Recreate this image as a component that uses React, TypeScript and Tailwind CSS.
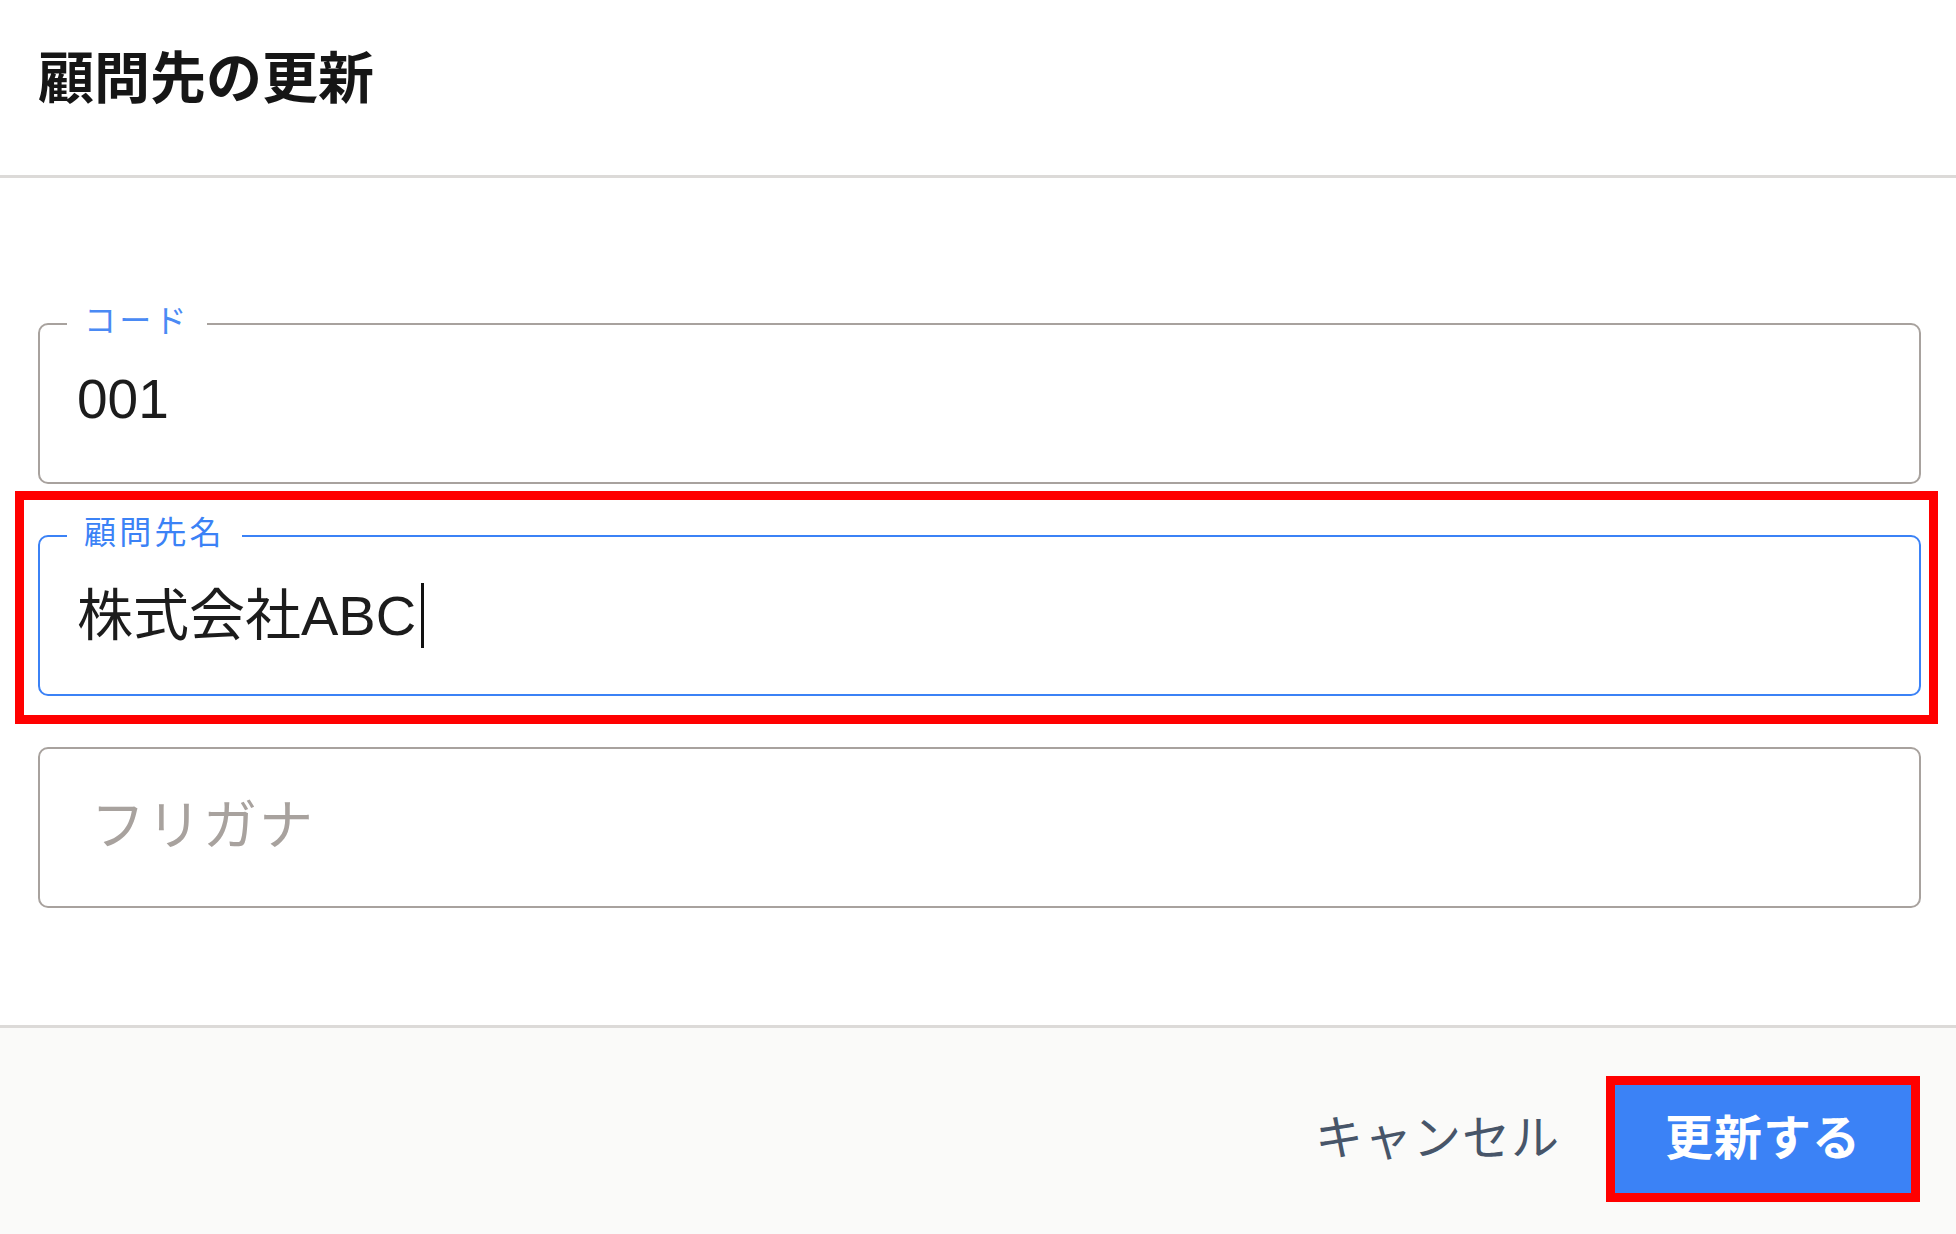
import type { ReactNode } from 'react';

const FONT = '"Liberation Sans", "Noto Sans CJK JP", sans-serif';

function Highlight({ className }: { className: string }) {
    // red annotation frame drawn over the element
    return <span className={`pointer-events-none absolute border-[9px] border-[#ff0000] ${className}`} />;
}

function Field({ label, focused, children }: { label?: string; focused?: boolean; children: ReactNode }) {
    return (
        <div
            className={`relative h-[161px] rounded-[10px] border-2 flex items-center pl-[37px] ${
                focused ? 'border-[#3b82f6]' : 'border-[#a8a29e]'
            }`}
        >
            {label && (
                <span
                    className={`absolute left-[27px] -top-[22px] bg-white px-[17px] text-[32px] leading-[36px] tracking-[0.1em] ${
                        focused ? 'text-[#3b82f6]' : 'text-[#4a8af4]'
                    }`}
                >
                    {label}
                </span>
            )}
            {children}
        </div>
    );
}

export default function App() {
    return (
        <div className="w-full h-[1234px] bg-white flex flex-col overflow-hidden" style={{ fontFamily: FONT }}>
            {/* Header */}
            <div className="h-[178px] shrink-0 border-b-[3px] border-[#dcdad8] pl-[38px] pt-[45px]">
                <h1 className="text-[56px] leading-[68px] font-bold text-[#161616]">顧問先の更新</h1>
            </div>

            {/* Body */}
            <div className="flex-1 pl-[38px] pr-[35px] pt-[145px] flex flex-col gap-[51px]">
                <Field label="コード">
                    <span className="-mt-[8px] text-[55px] leading-none text-[#1c1c1c]">001</span>
                </Field>

                <div className="relative">
                    <Field label="顧問先名" focused>
                        <span className="text-[56px] leading-none text-[#1c1c1c]">株式会社ABC</span>
                        <span className="ml-[5px] inline-block w-[3px] h-[65px] bg-[#111]" />
                    </Field>
                    <Highlight className="-left-[23px] -right-[17px] -top-[44px] -bottom-[28px]" />
                </div>

                <Field>
                    <span className="ml-[14px] -mt-[4px] text-[54px] leading-none tracking-[2px] text-[#a8a29e]">フリガナ</span>
                </Field>
            </div>

            {/* Footer */}
            <div className="h-[209px] shrink-0 border-t-[3px] border-[#dcdad8] bg-[#fafaf9] flex items-center justify-end pr-[42px] pt-[15px] gap-[52px]">
                <button className="text-[48px] leading-none tracking-[1px] text-[#475569]">キャンセル</button>
                <div className="relative">
                    <button className="w-[302px] h-[114px] bg-[#3b82f6] text-white text-[48px] font-bold tracking-[1px] leading-none shadow-md">
                        更新する
                    </button>
                    <Highlight className="-inset-[6px]" />
                </div>
            </div>
        </div>
    );
}
